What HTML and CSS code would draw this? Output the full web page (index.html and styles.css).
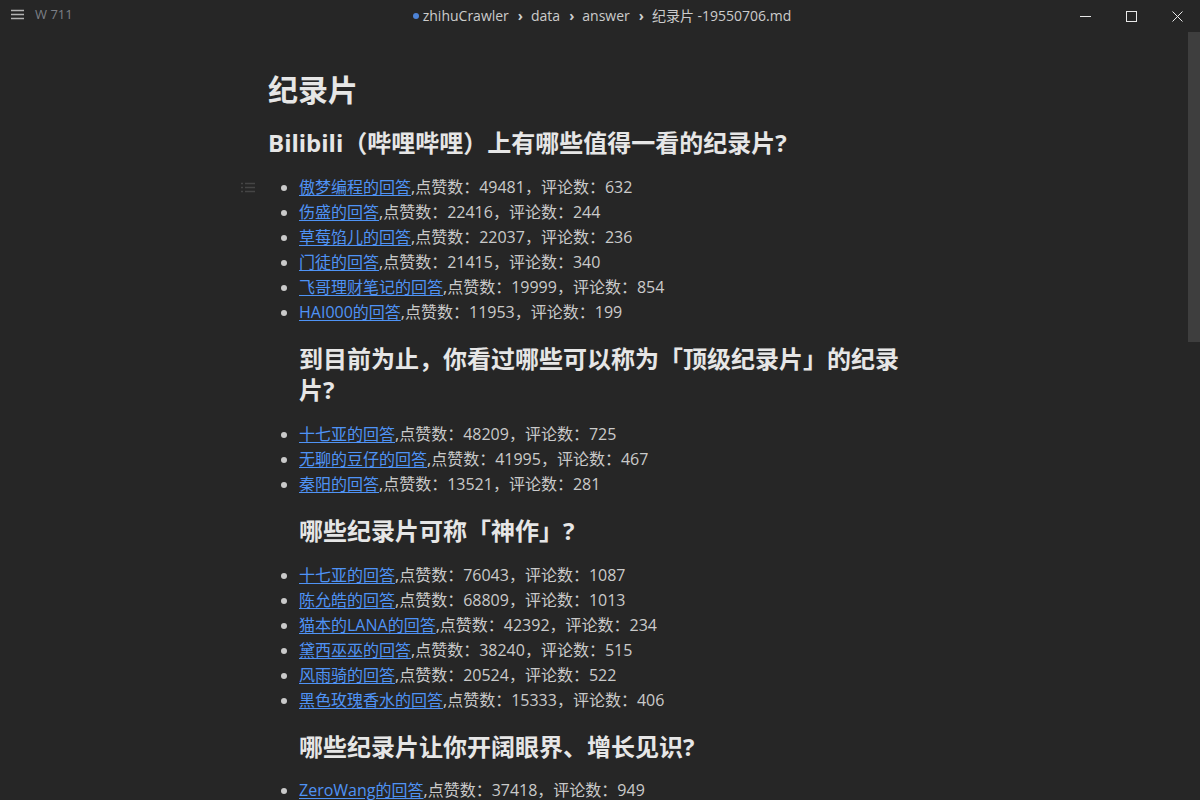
FILE: index.html
```html
<!DOCTYPE html>
<html lang="zh-CN">
<head>
<meta charset="utf-8">
<title>纪录片 -19550706.md</title>
<link rel="stylesheet" href="styles.css">
</head>
<body>
<div class="app">
  <header class="titlebar">
    <div class="tb-left">
      <svg class="menu-icon" width="13" height="11" viewBox="0 0 13 11"><path d="M0 1.5h13M0 5.5h13M0 9.5h13" stroke="#b4b4b4" stroke-width="1.4"/></svg>
      <span class="wordcount">W 711</span>
    </div>
    <div class="tb-center">
      <span class="dot"></span>
      <span class="crumb">zhihuCrawler</span><span class="sep">›</span>
      <span class="crumb">data</span><span class="sep">›</span>
      <span class="crumb">answer</span><span class="sep">›</span>
      <span class="crumb">纪录片 -19550706.md</span>
    </div>
    <div class="tb-right">
      <span class="winbtn"><svg width="11" height="11" viewBox="0 0 11 11"><path d="M0 5.5h11" stroke="#e8e8e8" stroke-width="1"/></svg></span>
      <span class="winbtn"><svg width="11" height="11" viewBox="0 0 11 11"><rect x="0.5" y="0.5" width="10" height="10" fill="none" stroke="#e8e8e8" stroke-width="1"/></svg></span>
      <span class="winbtn"><svg width="11" height="11" viewBox="0 0 11 11"><path d="M0.5 0.5l10 10M10.5 0.5l-10 10" stroke="#e8e8e8" stroke-width="1"/></svg></span>
    </div>
  </header>
  <div class="body">
    <main class="editor">
      <article class="write">
        <h1>纪录片</h1>
        <h2>Bilibili（哔哩哔哩）上有哪些值得一看的纪录片?</h2>
        <ul class="list first">
          <li><span class="list-tool"><svg width="14" height="11" viewBox="0 0 14 11"><path d="M0 1.5h2M0 5.5h2M0 9.5h2M4 1.5h10M4 5.5h10M4 9.5h10" stroke="#454545" stroke-width="1.3"/></svg></span><a href="#">傲梦编程的回答</a>,点赞数：49481，评论数：632</li>
          <li><a href="#">伤盛的回答</a>,点赞数：22416，评论数：244</li>
          <li><a href="#">草莓馅儿的回答</a>,点赞数：22037，评论数：236</li>
          <li><a href="#">门徒的回答</a>,点赞数：21415，评论数：340</li>
          <li><a href="#">飞哥理财笔记的回答</a>,点赞数：19999，评论数：854</li>
          <li><a href="#">HAI000的回答</a>,点赞数：11953，评论数：199</li>
        </ul>
        <h2 class="sub">到目前为止，你看过哪些可以称为「顶级纪录片」的纪录片?</h2>
        <ul class="list">
          <li><a href="#">十七亚的回答</a>,点赞数：48209，评论数：725</li>
          <li><a href="#">无聊的豆仔的回答</a>,点赞数：41995，评论数：467</li>
          <li><a href="#">秦阳的回答</a>,点赞数：13521，评论数：281</li>
        </ul>
        <h2 class="sub">哪些纪录片可称「神作」?</h2>
        <ul class="list">
          <li><a href="#">十七亚的回答</a>,点赞数：76043，评论数：1087</li>
          <li><a href="#">陈允皓的回答</a>,点赞数：68809，评论数：1013</li>
          <li><a href="#">猫本的LANA的回答</a>,点赞数：42392，评论数：234</li>
          <li><a href="#">黛西巫巫的回答</a>,点赞数：38240，评论数：515</li>
          <li><a href="#">风雨骑的回答</a>,点赞数：20524，评论数：522</li>
          <li><a href="#">黑色玫瑰香水的回答</a>,点赞数：15333，评论数：406</li>
        </ul>
        <h2 class="sub">哪些纪录片让你开阔眼界、增长见识?</h2>
        <ul class="list last">
          <li><a href="#">ZeroWang的回答</a>,点赞数：37418，评论数：949</li>
        </ul>
      </article>
    </main>
    <aside class="scrollbar"><div class="thumb"></div></aside>
  </div>
</div>
</body>
</html>
```
FILE: styles.css
```css
html, body {
  margin: 0;
  padding: 0;
  background: #262626;
  overflow: hidden;
}
.app {
  width: 1200px;
  height: 800px;
  display: flex;
  flex-direction: column;
  background: #262626;
  font-family: "Open Sans", "Noto Sans CJK SC", sans-serif;
  color: #cacaca;
}
.titlebar {
  height: 32px;
  flex: 0 0 32px;
  display: flex;
  align-items: center;
  position: relative;
  background: #262626;
}
.tb-left {
  display: flex;
  align-items: center;
  padding-left: 11px;
  gap: 11px;
  height: 100%;
}
.menu-icon { display: block; margin-top: -3px; }
.wordcount {
  font-size: 13px;
  color: #7d8087;
  margin-top: -5px;
}
.tb-center {
  position: absolute;
  left: 0;
  right: 0;
  top: 0;
  height: 32px;
  display: flex;
  align-items: center;
  justify-content: center;
  font-size: 14px;
  color: #cccccc;
  padding-left: 4px;
  margin-top: -1px;
  pointer-events: none;
}
.dot {
  width: 6px;
  height: 6px;
  border-radius: 50%;
  background: #4d83d6;
  margin-right: 4px;
  margin-top: 1px;
}
.sep {
  font-weight: 700;
  margin: 0 8px 0 9px;
  color: #cfcfcf;
}
.tb-right {
  margin-left: auto;
  display: flex;
  height: 100%;
}
.winbtn {
  width: 46px;
  height: 32px;
  display: flex;
  align-items: center;
  justify-content: center;
}
.winbtn svg { display: block; }
.body {
  flex: 1;
  display: flex;
  min-height: 0;
}
.editor {
  flex: 1;
  overflow: hidden;
}
.scrollbar {
  width: 12px;
  flex: 0 0 12px;
}
.thumb {
  height: 310px;
  background: #3e3e3e;
}
.write {
  width: 650px;
  margin: 0 0 0 268px;
  padding-top: 38px;
}
h1 {
  margin: 0 0 17px;
  font-size: 30px;
  line-height: 40px;
  font-weight: 700;
  color: #e6e6e6;
}
h2 {
  margin: 0;
  font-size: 24px;
  line-height: 31px;
  font-weight: 700;
  color: #e6e6e6;
}
h2.sub {
  margin-left: 31px;
}
.list {
  margin: 17px 0 18px;
  padding-left: 31px;
  font-size: 16px;
  line-height: 25px;
}
.list.last {
  margin-top: 16px;
}
.list li {
  position: relative;
}
.list li::marker {
  color: #cacaca;
}
a {
  color: #4f93f5;
  text-decoration: underline;
  text-underline-offset: 2px;
}
.list-tool {
  position: absolute;
  left: -58px;
  top: 7px;
  width: 14px;
  height: 11px;
}
.list-tool svg { display: block; }
```
